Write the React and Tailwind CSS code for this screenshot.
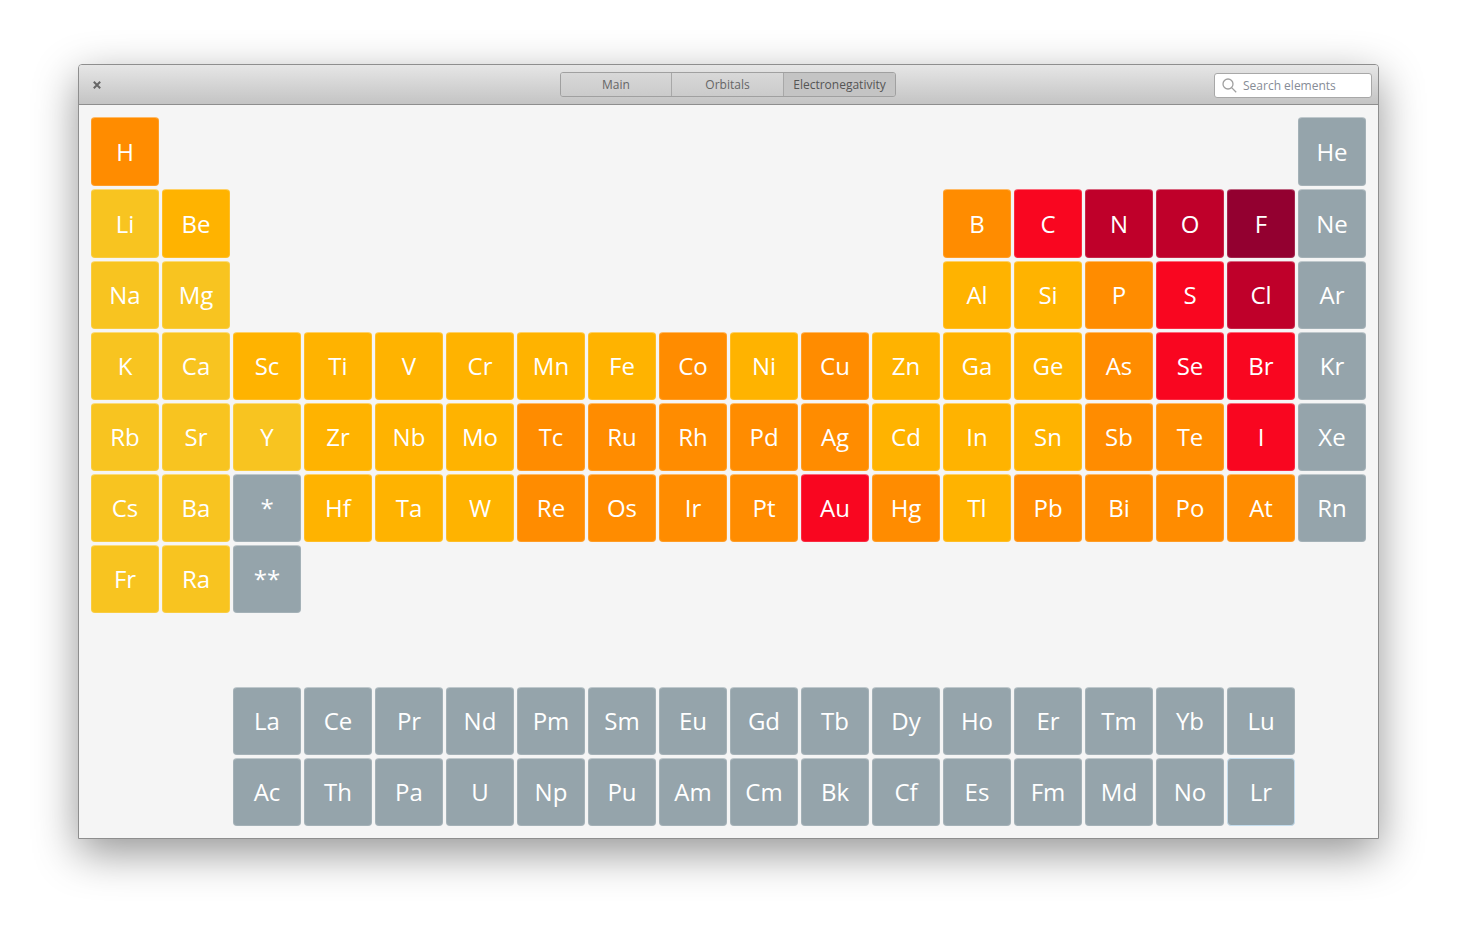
const yellow = 'bg-[#f8c420]'
const amber = 'bg-[#ffb300]'
const orange = 'bg-[#ff8c00]'
const red = 'bg-[#f90620]'
const crimson = 'bg-[#bf002a]'
const dark = 'bg-[#930030]'
const gray = 'bg-[#95a4ab]'

// [symbol, colour, grid column]
const rows = [
  [['H', orange, 'col-start-1'], ['He', gray, 'col-start-18']],
  [['Li', yellow, 'col-start-1'], ['Be', amber, 'col-start-2'], ['B', orange, 'col-start-13'], ['C', red, 'col-start-14'], ['N', crimson, 'col-start-15'], ['O', crimson, 'col-start-16'], ['F', dark, 'col-start-17'], ['Ne', gray, 'col-start-18']],
  [['Na', yellow, 'col-start-1'], ['Mg', yellow, 'col-start-2'], ['Al', amber, 'col-start-13'], ['Si', amber, 'col-start-14'], ['P', orange, 'col-start-15'], ['S', red, 'col-start-16'], ['Cl', crimson, 'col-start-17'], ['Ar', gray, 'col-start-18']],
  [['K', yellow], ['Ca', yellow], ['Sc', amber], ['Ti', amber], ['V', amber], ['Cr', amber], ['Mn', amber], ['Fe', amber], ['Co', orange], ['Ni', amber], ['Cu', orange], ['Zn', amber], ['Ga', amber], ['Ge', amber], ['As', orange], ['Se', red], ['Br', red], ['Kr', gray]],
  [['Rb', yellow], ['Sr', yellow], ['Y', yellow], ['Zr', amber], ['Nb', amber], ['Mo', amber], ['Tc', orange], ['Ru', orange], ['Rh', orange], ['Pd', orange], ['Ag', orange], ['Cd', amber], ['In', amber], ['Sn', amber], ['Sb', orange], ['Te', orange], ['I', red], ['Xe', gray]],
  [['Cs', yellow], ['Ba', yellow], ['*', gray], ['Hf', amber], ['Ta', amber], ['W', amber], ['Re', orange], ['Os', orange], ['Ir', orange], ['Pt', orange], ['Au', red], ['Hg', orange], ['Tl', amber], ['Pb', orange], ['Bi', orange], ['Po', orange], ['At', orange], ['Rn', gray]],
  [['Fr', yellow], ['Ra', yellow], ['**', gray]],
]

const lanthanides = ['La', 'Ce', 'Pr', 'Nd', 'Pm', 'Sm', 'Eu', 'Gd', 'Tb', 'Dy', 'Ho', 'Er', 'Tm', 'Yb', 'Lu']
const actinides = ['Ac', 'Th', 'Pa', 'U', 'Np', 'Pu', 'Am', 'Cm', 'Bk', 'Cf', 'Es', 'Fm', 'Md', 'No']

function Cell({ symbol, color, col, edge = 'border-white/15 border-t-white/40' }) {
  return (
    <div className={`${color} ${col || ''} ${edge} border flex items-center justify-center rounded-[4px] text-white text-[24px] leading-none`}>
      {symbol}
    </div>
  )
}

function Tab({ label, width, active }) {
  return (
    <div className={`${width} flex items-center justify-center text-[12px] border-r border-[#a8a8a8] last:border-r-0 ${active ? 'bg-[#c4c4c4] text-[#555555]' : 'bg-gradient-to-b from-[#d8d8d8] to-[#cbcbcb] text-[#666666]'}`}>
      {label}
    </div>
  )
}

export default function App() {
  return (
    <div className="min-h-[931px] bg-white pt-[64px] pl-[78px] font-['Open_Sans',sans-serif]">
      <div className="w-[1301px] h-[775px] border border-[#8e8e8e] rounded-t-[4px] shadow-[0_14px_44px_rgba(0,0,0,0.42)] bg-[#f5f5f5] flex flex-col">
        {/* Header */}
        <header className="relative h-[40px] shrink-0 flex items-center justify-center rounded-t-[3px] bg-gradient-to-b from-[#e6e6e6] to-[#c4c4c4] border-b border-[#8e8e8e]">
          <svg className="absolute left-[14px] top-[16px]" width="8" height="8" viewBox="0 0 8 8">
            <path d="M0.8 0.8l6.4 6.4M7.2 0.8l-6.4 6.4" stroke="#666666" strokeWidth="2" />
          </svg>

          <div className="flex h-[25px] -ml-[1px] border border-[#a0a0a0] rounded-[3px] overflow-hidden">
            <Tab label="Main" width="w-[111px]" />
            <Tab label="Orbitals" width="w-[112px]" />
            <Tab label="Electronegativity" width="w-[111px]" active />
          </div>

          <div className="absolute right-[6px] top-[8px] w-[158px] h-[25px] bg-white border border-[#a8a8a8] rounded-[3px] flex items-center pl-[7px] gap-[6px]">
            <svg width="15" height="15" viewBox="0 0 15 15" fill="none" stroke="#a0a0a0" strokeWidth="1.3">
              <circle cx="6" cy="6" r="5" />
              <path d="M9.6 9.6l4.6 4.6" />
            </svg>
            <span className="text-[12px] text-[#868c96]">Search elements</span>
          </div>
        </header>

        {/* Table */}
        <main className="flex-1 pt-[12px] pl-[12px]">
          <div className="grid grid-cols-[repeat(18,68px)] grid-rows-[69px_69px_68px_68px_68px_68px_68px_68px_68px_68px] gap-[3px]">
            {rows.map((row) =>
              row.map(([symbol, color, col]) => (
                <Cell key={symbol} symbol={symbol} color={color} col={col} />
              ))
            )}
            <div className="col-span-18" />
            <div className="col-span-2" />
            {lanthanides.map((s) => <Cell key={s} symbol={s} color={gray} />)}
            <div className="col-span-1" />
            <div className="col-span-2" />
            {actinides.map((s) => <Cell key={s} symbol={s} color={gray} />)}
            {/* Lr is the hovered cell, it has a pale blue edge */}
            <Cell symbol="Lr" color={gray} edge="border-[#c4dcec]" />
          </div>
        </main>
      </div>
    </div>
  )
}
